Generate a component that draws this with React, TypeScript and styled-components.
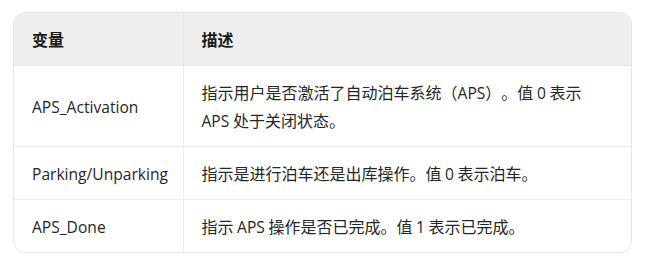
import React from "react";
import styled, { createGlobalStyle } from "styled-components";

const GlobalStyle = createGlobalStyle`
  body {
    margin: 0;
    background: #ffffff;
    font-family: "Noto Sans CJK SC", "Noto Sans", sans-serif;
    color: #262626;
  }
`;

interface IRow {
  name: string;
  desc: string;
}

const rows: IRow[] = [
  {
    name: "APS_Activation",
    desc: "指示用户是否激活了自动泊车系统（APS）。值 0 表示 APS 处于关闭状态。",
  },
  {
    name: "Parking/Unparking",
    desc: "指示是进行泊车还是出库操作。值 0 表示泊车。",
  },
  {
    name: "APS_Done",
    desc: "指示 APS 操作是否已完成。值 1 表示已完成。",
  },
];

// latin runs get a western face, the rest stays on the CJK font
function Mixed({ text }: { text: string }) {
  const parts = text.split(/([A-Za-z0-9_/]+)/);
  return (
    <>
      {parts.map((p, i) =>
        i % 2 === 1 ? <Latin key={i}>{p}</Latin> : <span key={i}>{p}</span>
      )}
    </>
  );
}

export default function App() {
  return (
    <>
      <GlobalStyle />
      <Page>
        <TableWrap>
          <Table>
            <colgroup>
              <col style={{ width: 169 }} />
              <col />
            </colgroup>
            <thead>
              <tr>
                <Th>变量</Th>
                <Th>描述</Th>
              </tr>
            </thead>
            <tbody>
              {rows.map((r) => (
                <tr key={r.name}>
                  <Td>
                    <Mixed text={r.name} />
                  </Td>
                  <Td>
                    <Mixed text={r.desc} />
                  </Td>
                </tr>
              ))}
            </tbody>
          </Table>
        </TableWrap>
      </Page>
    </>
  );
}

const Page = styled.div`
  padding: 12px 13px;
`;

const TableWrap = styled.div`
  width: 619px;
  border: 1px solid #e6e6e6;
  border-radius: 12px;
  overflow: hidden;
  box-sizing: border-box;
`;

const Table = styled.table`
  width: 100%;
  border-collapse: collapse;
  table-layout: fixed;
  text-spacing-trim: space-all;
`;

const Th = styled.th`
  background: #efefef;
  text-align: left;
  font-size: 16px;
  font-weight: 700;
  color: #1a1a1a;
  height: 52px;
  padding: 0 18px;
  box-sizing: border-box;
  border-bottom: 1px solid #e3e3e3;
  &:not(:first-child) {
    border-left: 1px solid #e3e3e3;
  }
`;

const Td = styled.td`
  font-size: 16px;
  line-height: 28px;
  padding: 12px 26px 12px 18px;
  vertical-align: middle;
  border-bottom: 1px solid #ececec;
  tr:last-child > & {
    border-bottom: none;
  }
  &:not(:first-child) {
    border-left: 1px solid #ececec;
  }
`;

const Latin = styled.span`
  font-family: "Open Sans", "Liberation Sans", sans-serif;
  font-size: 15.6px;
  line-height: 1;
`;
